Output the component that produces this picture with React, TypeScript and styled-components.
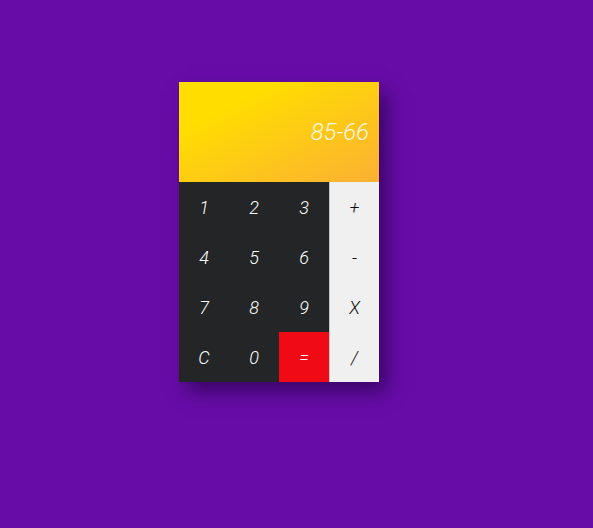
import React from "react";
import styled, { createGlobalStyle } from "styled-components";

const Global = createGlobalStyle`
  html, body { margin: 0; padding: 0; }
  body {
    background: #680ca8;
    font-family: Roboto, "Open Sans", sans-serif;
    width: 593px;
    height: 528px;
    overflow: hidden;
  }
`;

const Page = styled.div`
  display: flex;
  justify-content: flex-start;
  padding: 82px 0 0 179px;
`;

const Calculator = styled.div`
  width: 200px;
  display: flex;
  flex-direction: column;
  box-shadow: 8px 10px 18px rgba(20, 0, 50, 0.55);
`;

const Display = styled.div`
  height: 100px;
  display: flex;
  align-items: center;
  justify-content: flex-end;
  padding-right: 10px;
  background: linear-gradient(to bottom right, #ffdd00 25%, #fbb034);
  color: rgba(255, 255, 255, 0.88);
  font-size: 24px;
  font-weight: 300;
  font-style: italic;
  box-sizing: border-box;
`;

const Keys = styled.div`
  display: grid;
  grid-template-columns: repeat(4, 50px);
  grid-auto-rows: 50px;
  background: #232527;
`;

type Variant = "num" | "op" | "eq";

const Key = styled.button<{ $variant: Variant }>`
  border: none;
  margin: 0;
  padding: 0;
  font-family: Roboto, "Open Sans", sans-serif;
  font-size: 18px;
  font-weight: 300;
  font-style: italic;
  display: flex;
  align-items: center;
  justify-content: center;
  cursor: pointer;
  box-sizing: border-box;
  background: ${(p) =>
    p.$variant === "op" ? "#f0f0f0" : p.$variant === "eq" ? "#ef0a16" : "#232527"};
  color: ${(p) => (p.$variant === "op" ? "#111" : "#ffffff")};
  border-left: ${(p) => (p.$variant === "op" ? "1px solid #c8c8c8" : "none")};
`;

const rows: [string, Variant][][] = [
  [["1", "num"], ["2", "num"], ["3", "num"], ["+", "op"]],
  [["4", "num"], ["5", "num"], ["6", "num"], ["-", "op"]],
  [["7", "num"], ["8", "num"], ["9", "num"], ["X", "op"]],
  [["C", "num"], ["0", "num"], ["=", "eq"], ["/", "op"]],
];

export default function App() {
  return (
    <>
      <Global />
      <Page>
        <Calculator>
          <Display>85-66</Display>
          <Keys>
            {rows.flat().map(([label, v], i) => (
              <Key key={i} $variant={v}>
                {label}
              </Key>
            ))}
          </Keys>
        </Calculator>
      </Page>
    </>
  );
}
